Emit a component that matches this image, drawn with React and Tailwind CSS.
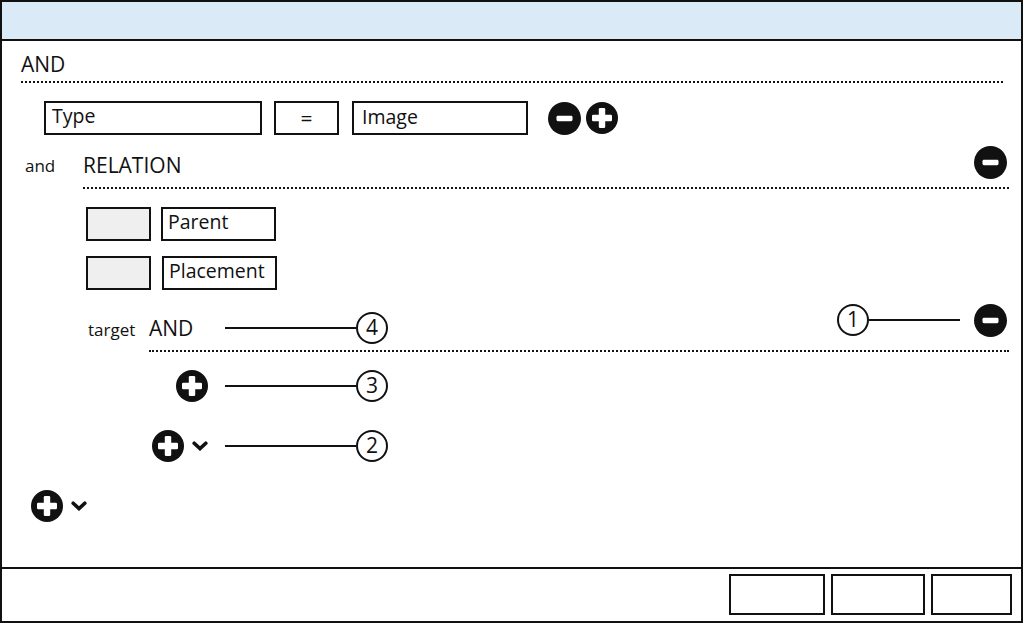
import React from "react";

const font = { fontFamily: '"Open Sans", "Noto Sans", sans-serif' };

function PlusIcon() {
  return (
    <svg width="32" height="32" viewBox="0 0 32 32" className="shrink-0">
      <circle cx="16" cy="16" r="16" fill="#111" />
      <rect x="6" y="12.8" width="20" height="6.4" rx="1.2" fill="#fff" />
      <rect x="12.8" y="6" width="6.4" height="20" rx="1.2" fill="#fff" />
    </svg>
  );
}

function MinusIcon() {
  return (
    <svg width="33" height="33" viewBox="0 0 33 33" className="shrink-0">
      <circle cx="16.5" cy="16.5" r="16.5" fill="#111" />
      <rect x="8.5" y="13.8" width="16" height="5.4" rx="1.4" fill="#fff" />
    </svg>
  );
}

function Chevron() {
  return (
    <svg width="16" height="10" viewBox="0 0 16 10" className="shrink-0">
      <path d="M2.2 2.2 L8 7.6 L13.8 2.2" fill="none" stroke="#111" strokeWidth="3.6" strokeLinecap="round" strokeLinejoin="miter" />
    </svg>
  );
}

function Num({ n }) {
  return (
    <div className="w-8 h-8 shrink-0 rounded-full border-2 border-[#111] flex items-center justify-center text-[21px] leading-none text-[#111]">
      <span className="-mt-[1px]">{n}</span>
    </div>
  );
}

function Line({ w }) {
  return <div className={`h-[2px] bg-[#111] shrink-0 ${w}`} />;
}

export default function App() {
  return (
    <div style={font} className="w-[1023px] h-[623px] border-2 border-[#111] flex flex-col bg-white text-[#111]">
      <div className="h-[39px] shrink-0 bg-[#dbeaf7] border-b-2 border-[#111]" />

      <div className="flex-1 flex flex-col">
        {/* AND heading */}
        <div className="mt-[9px] ml-[19px] mr-[18px] pb-[3px] border-b-2 border-dotted border-[#111]">
          <div className="text-[21px] leading-[28px]">AND</div>
        </div>

        {/* Type row */}
        <div className="mt-[18px] ml-[42px] flex items-center">
          <div className="w-[218px] h-[34px] border-2 border-[#111] pl-[6px] text-[19.5px] leading-[26px]">Type</div>
          <div className="ml-[12px] w-[65px] h-[34px] border-2 border-[#111] flex items-center justify-center text-[21px] leading-[26px]">=</div>
          <div className="ml-[13px] w-[176px] h-[34px] border-2 border-[#111] pl-[8px] pt-[1px] text-[19.5px] leading-[26px]">Image</div>
          <div className="ml-[20px]"><MinusIcon /></div>
          <div className="ml-[5px]"><PlusIcon /></div>
        </div>

        {/* and RELATION */}
        <div className="mt-[11px] flex">
          <div className="w-[81px] pl-[23px] pt-[8px] text-[17px] leading-[24px] shrink-0">and</div>
          <div className="flex-1 mr-[12px] flex flex-col">
            <div className="pb-[8px] border-b-2 border-dotted border-[#111] flex items-start justify-between">
              <div className="mt-[5px] text-[21px] leading-[28px]">RELATION</div>
              <div className="mr-[2px]"><MinusIcon /></div>
            </div>

            <div className="mt-[18px] ml-[3px] flex items-start">
              <div className="w-[65px] h-[34px] bg-[#efefef] border-2 border-[#111]" />
              <div className="ml-[10px] w-[115px] h-[34px] border-2 border-[#111] pl-[5px] text-[19.5px] leading-[26px]">Parent</div>
            </div>
            <div className="mt-[15px] ml-[3px] flex items-start">
              <div className="w-[65px] h-[34px] bg-[#efefef] border-2 border-[#111]" />
              <div className="ml-[11px] w-[115px] h-[34px] border-2 border-[#111] pl-[5px] text-[19.5px] leading-[26px]">Placement</div>
            </div>

            {/* target AND */}
            <div className="mt-[14px] flex">
              <div className="w-[66px] shrink-0 pl-[5px] pt-[14px] text-[17px] leading-[24px]">target</div>
              <div className="flex-1 flex flex-col">
                <div className="h-[48px] pb-[6px] border-b-2 border-dotted border-[#111] flex items-start">
                  <div className="mt-[8px] h-8 flex items-center">
                    <div className="w-[76px] text-[21px] leading-[28px]">AND</div>
                    <Line w="w-[131px]" />
                    <Num n="4" />
                  </div>
                  <div className="flex-1" />
                  <div className="h-8 flex items-center mr-[2px]">
                    <Num n="1" />
                    <Line w="w-[91px]" />
                    <div className="ml-[14px]"><MinusIcon /></div>
                  </div>
                </div>

                <div className="mt-[18px] h-8 flex items-center">
                  <div className="w-[76px] pl-[27px] flex items-center"><PlusIcon /></div>
                  <Line w="w-[131px]" />
                  <Num n="3" />
                </div>

                <div className="mt-[28px] h-8 flex items-center">
                  <div className="w-[76px] pl-[3px] flex items-center gap-[8px]">
                    <PlusIcon />
                    <Chevron />
                  </div>
                  <Line w="w-[131px]" />
                  <Num n="2" />
                </div>
              </div>
            </div>
          </div>
        </div>

        {/* bottom add */}
        <div className="mt-[28px] ml-[29px] flex items-center gap-[8px]">
          <PlusIcon />
          <Chevron />
        </div>
      </div>

      <div className="h-[54px] shrink-0 border-t-2 border-[#111] flex justify-end items-start pt-[5px] pr-[9px] gap-[6px]">
        <div className="w-[96px] h-[41px] border-2 border-[#111]" />
        <div className="w-[94px] h-[41px] border-2 border-[#111]" />
        <div className="w-[81px] h-[41px] border-2 border-[#111]" />
      </div>
    </div>
  );
}
